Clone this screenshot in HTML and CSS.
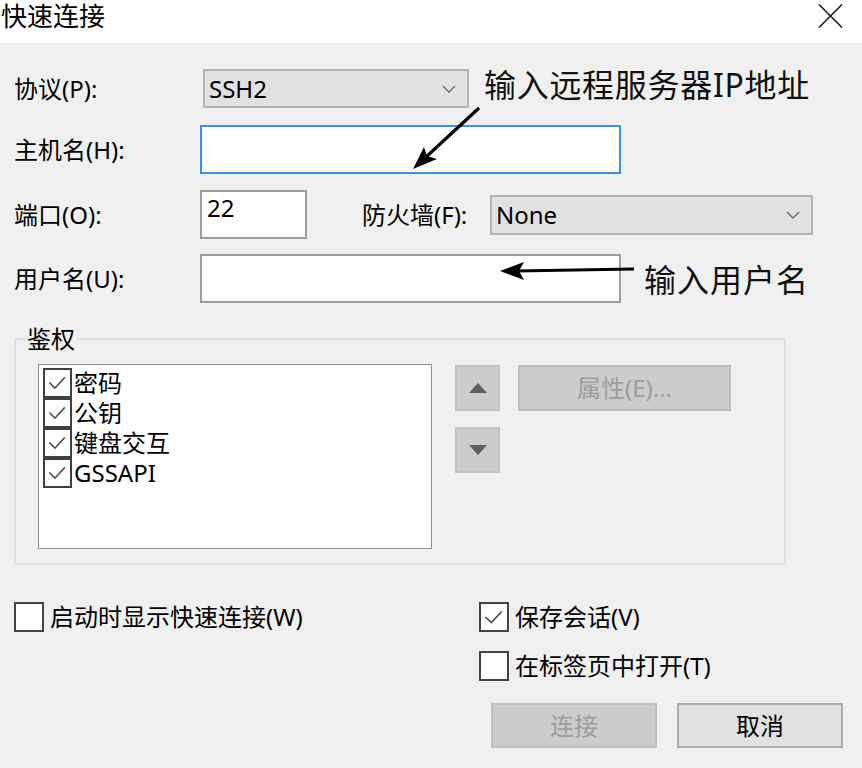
FILE: index.html
```html
<!DOCTYPE html>
<html lang="zh-CN">
<head>
<meta charset="utf-8">
<title>快速连接</title>
<link rel="stylesheet" href="styles.css">
</head>
<body>
<div class="window">
  <header class="titlebar">
    <span class="title">快速连接</span>
    <svg class="close" viewBox="0 0 25 24" aria-label="关闭"><path d="M1 0.5 L24 23.5 M24 0.5 L1 23.5" stroke="#1f1f1f" stroke-width="1.6" fill="none"/></svg>
  </header>

  <main class="content">
    <div class="row r1">
      <label class="lbl">协议(P):</label>
      <div class="combo protocol"><span>SSH2</span><svg class="chev" viewBox="0 0 14 8"><path d="M1 1 L7 7 L13 1" stroke="#6a6a6a" stroke-width="1.3" fill="none"/></svg></div>
    </div>
    <div class="row r2">
      <label class="lbl">主机名(H):</label>
      <input class="field wide focused" type="text" value="">
    </div>
    <div class="row r3">
      <label class="lbl">端口(O):</label>
      <input class="field port" type="text" value="22">
      <label class="lbl fw">防火墙(F):</label>
      <div class="combo firewall"><span>None</span><svg class="chev" viewBox="0 0 14 8"><path d="M1 1 L7 7 L13 1" stroke="#6a6a6a" stroke-width="1.3" fill="none"/></svg></div>
    </div>
    <div class="row r4">
      <label class="lbl">用户名(U):</label>
      <input class="field wide" type="text" value="">
    </div>

    <fieldset class="auth">
      <legend>鉴权</legend>
      <div class="auth-body">
        <ul class="methods">
          <li><span class="box checked"><svg viewBox="0 0 29 29"><path d="M5 14 L11.5 20.5 L23 8" stroke="#4a4a4a" stroke-width="1.8" fill="none"/></svg></span>密码</li>
          <li><span class="box checked"><svg viewBox="0 0 29 29"><path d="M5 14 L11.5 20.5 L23 8" stroke="#4a4a4a" stroke-width="1.8" fill="none"/></svg></span>公钥</li>
          <li><span class="box checked"><svg viewBox="0 0 29 29"><path d="M5 14 L11.5 20.5 L23 8" stroke="#4a4a4a" stroke-width="1.8" fill="none"/></svg></span>键盘交互</li>
          <li><span class="box checked"><svg viewBox="0 0 29 29"><path d="M5 14 L11.5 20.5 L23 8" stroke="#4a4a4a" stroke-width="1.8" fill="none"/></svg></span>GSSAPI</li>
        </ul>
        <div class="order">
          <button class="btn sq" type="button" aria-label="上移"><svg viewBox="0 0 18 10"><polygon points="0,10 9,0 18,10" fill="#5f5f5f"/></svg></button>
          <button class="btn sq" type="button" aria-label="下移"><svg viewBox="0 0 18 10"><polygon points="0,0 18,0 9,10" fill="#5f5f5f"/></svg></button>
        </div>
        <button class="btn disabled props" type="button">属性(E)...</button>
      </div>
    </fieldset>

    <div class="bottom">
      <div class="left">
        <div class="check"><span class="cb"></span><span>启动时显示快速连接(W)</span></div>
      </div>
      <div class="right">
        <div class="check"><span class="cb"><svg viewBox="0 0 30 30"><path d="M5 15 L12 21.5 L24 8.5" stroke="#4a4a4a" stroke-width="1.8" fill="none"/></svg></span><span>保存会话(V)</span></div>
        <div class="check"><span class="cb"></span><span>在标签页中打开(T)</span></div>
      </div>
    </div>

    <div class="actions">
      <button class="btn disabled act" type="button">连接</button>
      <button class="btn normal act" type="button">取消</button>
    </div>
  </main>

  <div class="note note-ip">输入远程服务器IP地址</div>
  <div class="note note-user">输入用户名</div>
  <svg class="arrows" viewBox="0 0 862 768">
    <line x1="479" y1="108" x2="426" y2="157" stroke="#000" stroke-width="3.2"/>
    <polygon points="413,169 424,147 427,156 437,159" fill="#000"/>
    <line x1="634" y1="269" x2="516" y2="271" stroke="#000" stroke-width="3.2"/>
    <polygon points="500,271 524,262 519,271 524,280" fill="#000"/>
  </svg>
</div>
</body>
</html>
```

FILE: styles.css
```css
html, body {
  margin: 0;
  padding: 0;
}

body {
  background: #f0f0f0;
  font-family: "Noto Sans", "Noto Sans CJK SC", sans-serif;
  font-size: 24px;
  color: #000;
}

.window {
  position: relative;
  width: 862px;
  height: 768px;
  overflow: hidden;
  background: #f0f0f0;
}

/* title bar */
.titlebar {
  box-sizing: border-box;
  height: 43px;
  padding-top: 3px;
  background: #fff;
  display: flex;
  justify-content: space-between;
  align-items: flex-start;
}

.title {
  font-size: 26px;
  line-height: 27px;
  margin-left: 1px;
}

.close {
  width: 25px;
  height: 24px;
  margin: 1px 19px 0 0;
}

/* form */
.content {
  padding-left: 14px;
}

.row {
  display: flex;
  align-items: center;
}

.lbl {
  width: 186px;
  flex: none;
  line-height: 30px;
}

.r1 { margin-top: 26px; height: 39px; }
.r2 { margin-top: 17px; height: 49px; }
.r3 { margin-top: 16px; height: 49px; }
.r4 { margin-top: 15px; height: 49px; }

.combo {
  box-sizing: border-box;
  display: flex;
  align-items: center;
  justify-content: space-between;
  background: #e1e1e1;
  border: 2px solid #b4b4b4;
  padding: 0 11px 0 4px;
  line-height: 30px;
}

.protocol {
  width: 266px;
  height: 39px;
  margin-left: 3px;
}

.firewall {
  width: 323px;
  height: 40px;
}

.chev {
  width: 14px;
  height: 8px;
}

.field {
  box-sizing: border-box;
  margin: 0;
  border: 2px solid #9c9c9c;
  background: #fff;
  font: inherit;
  color: #000;
  padding: 0 6px;
  outline: none;
}

.wide {
  width: 421px;
  height: 49px;
}

.focused {
  border-color: #3c90e2;
}

.port {
  width: 107px;
  height: 49px;
  padding: 0 5px 14px;
  line-height: 30px;
}

.fw {
  width: 128px;
  margin-left: 55px;
}

/* group box */
.auth {
  box-sizing: border-box;
  width: 772px;
  margin: 24px 0 0 0;
  padding: 13px 0 14px 22px;
  border: 2px solid #e0e0e0;
  min-inline-size: 0;
}

.auth legend {
  margin-left: -13px;
  padding: 0 2px;
  line-height: 24px;
}

.auth-body {
  display: flex;
  align-items: flex-start;
}

.methods {
  box-sizing: border-box;
  list-style: none;
  margin: 0;
  width: 394px;
  height: 185px;
  padding: 3px 0 0 4px;
  background: #fff;
  border: 1.5px solid #8c9098;
}

.methods li {
  display: flex;
  align-items: center;
  height: 30px;
  line-height: 30px;
}

.box {
  box-sizing: border-box;
  width: 29px;
  height: 30px;
  border: 2px solid #3f3f3f;
  background: #fff;
  margin-right: 2px;
  display: flex;
}

.box svg {
  width: 100%;
  height: 100%;
}

.btn {
  box-sizing: border-box;
  margin: 0;
  font: inherit;
  padding: 0;
  display: flex;
  align-items: center;
  justify-content: center;
  line-height: 30px;
}

.order {
  display: flex;
  flex-direction: column;
  gap: 16px;
  margin: 1px 0 0 23px;
}

.sq {
  width: 45px;
  height: 46px;
  background: #cccccc;
  border: 2px solid #c2c2c2;
}

.sq svg {
  width: 18px;
  height: 10px;
}

.disabled {
  background: #cccccc;
  border: 2px solid #c0c0c0;
  color: #9d9d9d;
}

.normal {
  background: #e1e1e1;
  border: 2px solid #adadad;
  color: #000;
}

.props {
  width: 213px;
  height: 46px;
  margin: 1px 0 0 18px;
}

/* bottom options */
.bottom {
  display: flex;
  margin-top: 37px;
}

.left {
  width: 465px;
}

.right {
  display: flex;
  flex-direction: column;
  gap: 19px;
}

.check {
  display: flex;
  align-items: center;
  gap: 6px;
  line-height: 30px;
}

.cb {
  box-sizing: border-box;
  width: 30px;
  height: 30px;
  border: 2px solid #444;
  background: #fff;
  display: flex;
}

.cb svg {
  width: 100%;
  height: 100%;
}

.actions {
  display: flex;
  justify-content: flex-end;
  gap: 20px;
  margin-top: 22px;
  padding-right: 19px;
}

.act {
  width: 166px;
  height: 45px;
}

/* annotations */
.note {
  position: absolute;
  font-size: 32px;
  line-height: 40px;
  color: #111;
  white-space: nowrap;
}

.note-ip {
  left: 484px;
  top: 65px;
  letter-spacing: 0.7px;
}

.note-user {
  left: 644px;
  top: 260px;
  letter-spacing: 1px;
}

.arrows {
  position: absolute;
  left: 0;
  top: 0;
  width: 862px;
  height: 768px;
  pointer-events: none;
}
```
